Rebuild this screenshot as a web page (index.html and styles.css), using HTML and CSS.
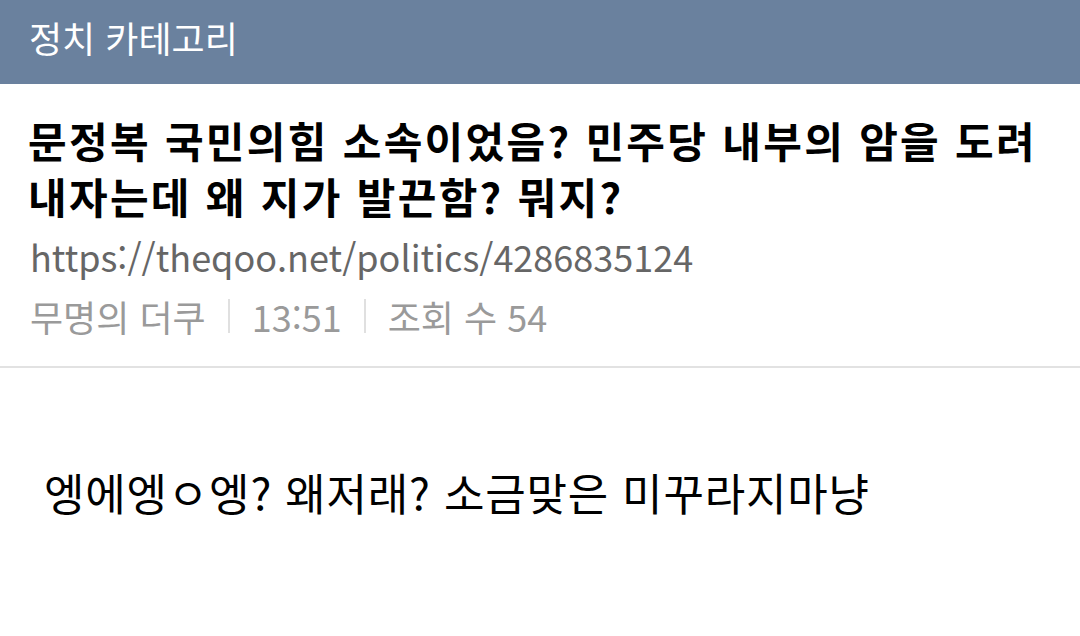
FILE: index.html
```html
<!DOCTYPE html>
<html lang="ko">
<head>
    <meta charset="UTF-8">
    <meta name="viewport" content="width=device-width, initial-scale=1.0">
    <title>정치 카테고리</title>
    <link rel="stylesheet" href="styles.css">
</head>
<body>

    <!-- Category bar -->
    <header class="catBar">정치 카테고리</header>

    <!-- Post header: title, link, meta -->
    <section class="postHead">
        <h1 class="postTitle">문정복 국민의힘 소속이었음? 민주당 내부의 암을 도려 내자는데 왜 지가 발끈함? 뭐지?</h1>
        <div class="postUrl">https://theqoo.net/politics/4286835124</div>
        <div class="postMeta">
            <span>무명의 더쿠</span>
            <span class="sep"></span>
            <span>13:51</span>
            <span class="sep"></span>
            <span>조회 수 54</span>
        </div>
    </section>

    <!-- Post body -->
    <article class="postBody">
        <p>엥에엥ㅇ엥? 왜저래? 소금맞은 미꾸라지마냥</p>
    </article>

</body>
</html>
```

FILE: styles.css
```css
/* Base page */
body {
    margin: 0;
    padding: 0;
    background: #ffffff;
    color: #000000;
    font-family: 'Noto Sans CJK KR', 'Noto Sans', sans-serif;
}

/* Top category bar */
.catBar {
    height: 84px;
    background: #6a819e;
    color: #ffffff;
    font-size: 36px;
    line-height: 74px;
    padding-left: 29px;
}

/* Title block */
.postHead {
    padding: 28px 30px 26px 28px;
    border-bottom: 2px solid #e2e2e2;
}

.postTitle {
    margin: 0;
    font-size: 42px;
    font-weight: 700;
    line-height: 56px;
    letter-spacing: 2.3px;
}

.postUrl {
    margin-top: 8px;
    font-size: 36px;
    line-height: 48px;
    color: #666666;
    padding-left: 2px;
}

.postMeta {
    margin-top: 12px;
    display: flex;
    align-items: center;
    gap: 22px;
    font-size: 36px;
    line-height: 48px;
    color: #9a9a9a;
    padding-left: 2px;
}

.sep {
    width: 2px;
    height: 34px;
    background: #e0e0e0;
}

/* Body text */
.postBody {
    padding: 94px 44px;
}

.postBody p {
    margin: 0;
    font-size: 44px;
    line-height: 60px;
    letter-spacing: 0.8px;
}
```
